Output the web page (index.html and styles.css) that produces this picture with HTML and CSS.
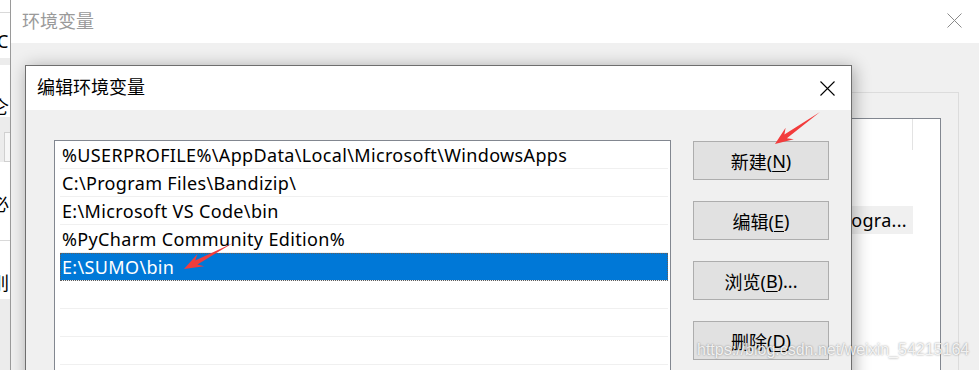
FILE: index.html
```html
<!DOCTYPE html>
<html lang="zh-CN">
<head>
<meta charset="utf-8">
<title>编辑环境变量</title>
<link rel="stylesheet" href="styles.css">
</head>
<body>
<div class="desktop">
  <div class="other-win">
    <div class="ow-white ow-h12"></div>
    <div class="ow-sep"></div>
    <div class="ow-white ow-h45"><span class="ow-char ow-c">C</span></div>
    <div class="ow-gray ow-h7"></div>
    <div class="ow-white ow-h52"><span class="ow-char ow-cjk">仑</span></div>
    <div class="ow-gray ow-h12"></div>
    <div class="ow-gray ow-h33"><div class="ow-input"></div></div>
    <div class="ow-white ow-h78"><span class="ow-char ow-cjk">必</span></div>
    <div class="ow-sep"></div>
    <div class="ow-white ow-h58"><span class="ow-char ow-cjk">刖</span></div>
    <div class="ow-gray ow-fill"></div>
  </div>

  <div class="env-win">
    <div class="env-titlebar">
      <span class="env-title">环境变量</span>
      <svg class="env-close" width="15" height="15" viewBox="0 0 15 15"><path d="M0.5 0.5 L14.5 14.5 M14.5 0.5 L0.5 14.5" stroke="#8a8a8a" stroke-width="1" fill="none"/></svg>
    </div>
    <div class="env-body">
      <div class="groupbox">
        <div class="listview">
          <div class="lv-header"><div class="lv-col"></div><div class="lv-rest"></div></div>
          <div class="lv-row"><div class="lv-cell"></div><div class="lv-rest"></div></div>
          <div class="lv-row"><div class="lv-cell"></div><div class="lv-rest"></div></div>
          <div class="lv-row"><div class="lv-cell lv-cell-sel"><span>Progra...</span></div><div class="lv-rest"></div></div>
        </div>
      </div>
    </div>
  </div>

  <div class="dialog">
    <div class="dlg-titlebar">
      <span class="dlg-title">编辑环境变量</span>
      <svg class="dlg-close" width="15" height="15" viewBox="0 0 15 15"><path d="M0.5 0.5 L14.5 14.5 M14.5 0.5 L0.5 14.5" stroke="#000" stroke-width="1.1" fill="none"/></svg>
    </div>
    <div class="dlg-body">
      <div class="pathlist">
        <div class="path-item">%USERPROFILE%\AppData\Local\Microsoft\WindowsApps</div>
        <div class="path-item">C:\Program Files\Bandizip\</div>
        <div class="path-item">E:\Microsoft VS Code\bin</div>
        <div class="path-item">%PyCharm Community Edition%</div>
        <div class="path-item path-item-selected">E:\SUMO\bin</div>
        <div class="path-item"></div>
        <div class="path-item"></div>
        <div class="path-item"></div>
      </div>
      <div class="btn-col">
        <div class="btn">新建(<u>N</u>)</div>
        <div class="btn">编辑(<u>E</u>)</div>
        <div class="btn">浏览(<u>B</u>)...</div>
        <div class="btn">删除(<u>D</u>)</div>
      </div>
    </div>
  </div>

  <svg class="arrows" width="979" height="370" viewBox="0 0 979 370">
    <polygon points="820,112 786.9,138.2 793.8,139.2 775,144 785.6,127.8 784.4,134.6" fill="#f23c3c"/>
    <polygon points="233,243 197.4,264.4 204.1,266.3 184,269 197.5,253.9 195.3,260.5" fill="#f23c3c"/>
  </svg>

  <div class="watermark">https://blog.csdn.net/weixin_54215164</div>
</div>
</body>
</html>
```

FILE: styles.css
```css
* { box-sizing: border-box; }

html, body {
  margin: 0;
  padding: 0;
}

body {
  font-family: "Noto Sans", "Noto Sans CJK SC", sans-serif;
  font-size: 18px;
  color: #000;
  background: #f0f0f0;
}

.desktop {
  position: relative;
  width: 979px;
  height: 370px;
  overflow: hidden;
  display: flex;
  background: #f0f0f0;
}

/* window far behind, only a sliver visible */
.other-win {
  width: 11px;
  flex: none;
  display: flex;
  flex-direction: column;
  border-right: 1px solid #9a9a9a;
  overflow: hidden;
  box-shadow: inset -3px 0 3px rgba(0,0,0,0.08);
}
.ow-white { background: #fff; position: relative; overflow: hidden; }
.ow-gray { background: #ececec; position: relative; overflow: hidden; }
.ow-sep { height: 1px; background: #d9d9d9; flex: none; }
.ow-h7 { height: 7px; flex: none; }
.ow-h12 { height: 12px; flex: none; }
.ow-h33 { height: 33px; flex: none; }
.ow-h45 { height: 45px; flex: none; }
.ow-h52 { height: 52px; flex: none; }
.ow-h58 { height: 58px; flex: none; }
.ow-h78 { height: 78px; flex: none; }
.ow-fill { flex: 1; }
.ow-char {
  display: block;
  white-space: nowrap;
  font-size: 18px;
  line-height: 20px;
}
.ow-c { margin: 18px 0 0 -3px; font-family: "Noto Sans", sans-serif; }
.ow-cjk { margin: 32px 0 0 -9px; }
.ow-input {
  margin: 3px 0 0 4px;
  height: 30px;
  border: 1px solid #d0d0d0;
  border-right: none;
  background: #f7f7f7;
}

/* 环境变量 window (inactive) */
.env-win {
  flex: 1;
  display: flex;
  flex-direction: column;
}
.env-titlebar {
  height: 43px;
  flex: none;
  background: #fff;
  display: flex;
  align-items: center;
  justify-content: space-between;
  padding: 0 17px 0 11px;
}
.env-title {
  color: #9a9a9a;
  font-size: 18px;
  line-height: 20px;
  margin-top: -2px;
}
.env-close { display: block; margin-top: -2px; }

.env-body {
  flex: 1;
  display: flex;
  justify-content: flex-end;
  padding: 49px 20px 0 0;
}
.groupbox {
  width: 760px;
  border: 1px solid #dcdcdc;
  border-bottom: none;
  padding: 25px 17px 0 0;
  display: flex;
  justify-content: flex-end;
}
.listview {
  width: 700px;
  background: #fff;
  border: 1px solid #828790;
  border-bottom: none;
  display: flex;
  flex-direction: column;
}
.lv-header {
  height: 31px;
  display: flex;
}
.lv-col {
  flex: 1;
  border-right: 1px solid #e3e3e3;
}
.lv-rest { width: 27px; flex: none; }
.lv-row {
  height: 28px;
  display: flex;
}
.lv-cell {
  flex: 1;
  display: flex;
  justify-content: flex-end;
  align-items: center;
  overflow: hidden;
  padding-right: 6px;
  white-space: nowrap;
}
.lv-cell-sel { background: #f0f0f0; }
.lv-cell span { font-size: 18px; line-height: 28px; letter-spacing: 0.3px; }

/* 编辑环境变量 dialog */
.dialog {
  position: absolute;
  left: 25px;
  top: 65px;
  width: 827px;
  height: 330px;
  border: 1px solid #6e6e6e;
  background: #f0f0f0;
  box-shadow: 2px 2px 16px rgba(0,0,0,0.32);
  display: flex;
  flex-direction: column;
}
.dlg-titlebar {
  height: 44px;
  flex: none;
  background: #fff;
  display: flex;
  align-items: center;
  justify-content: space-between;
  padding: 0 16px 0 11px;
}
.dlg-title {
  font-size: 18px;
  line-height: 20px;
  margin-top: -2px;
}
.dlg-close { display: block; }

.dlg-body {
  flex: 1;
  display: flex;
  gap: 22px;
  padding: 30px 22px 0 28px;
}
.pathlist {
  width: 617px;
  flex: none;
  background: #fff;
  border: 1px solid #828790;
  border-bottom: none;
  padding: 0 2px 0 5px;
}
.path-item {
  height: 28px;
  line-height: 28px;
  border-bottom: 1px solid #f0f0f0;
  padding-left: 2px;
  white-space: nowrap;
  overflow: hidden;
  font-size: 18px;
  letter-spacing: 0.35px;
}
.path-item-selected {
  background: #0078d7;
  color: #fff;
  outline: 1px dotted #5e5e5e;
  outline-offset: -1px;
}

.btn-col {
  width: 136px;
  flex: none;
  display: flex;
  flex-direction: column;
  gap: 21px;
  padding-top: 1px;
}
.btn {
  height: 39px;
  background: #e1e1e1;
  border: 1px solid #adadad;
  display: flex;
  align-items: center;
  justify-content: center;
  font-size: 18px;
  white-space: nowrap;
  padding-top: 1px;
}
.btn u { text-underline-offset: 3px; text-decoration-thickness: 1px; }

.arrows {
  position: absolute;
  left: 0;
  top: 0;
  pointer-events: none;
}

.watermark {
  position: absolute;
  left: 697px;
  top: 340px;
  font-family: "Liberation Sans", Arial, sans-serif;
  font-size: 16px;
  line-height: 20px;
  color: rgba(255,255,255,0.85);
  text-shadow: 0 0 2px rgba(0,0,0,0.45);
  white-space: nowrap;
}
```
